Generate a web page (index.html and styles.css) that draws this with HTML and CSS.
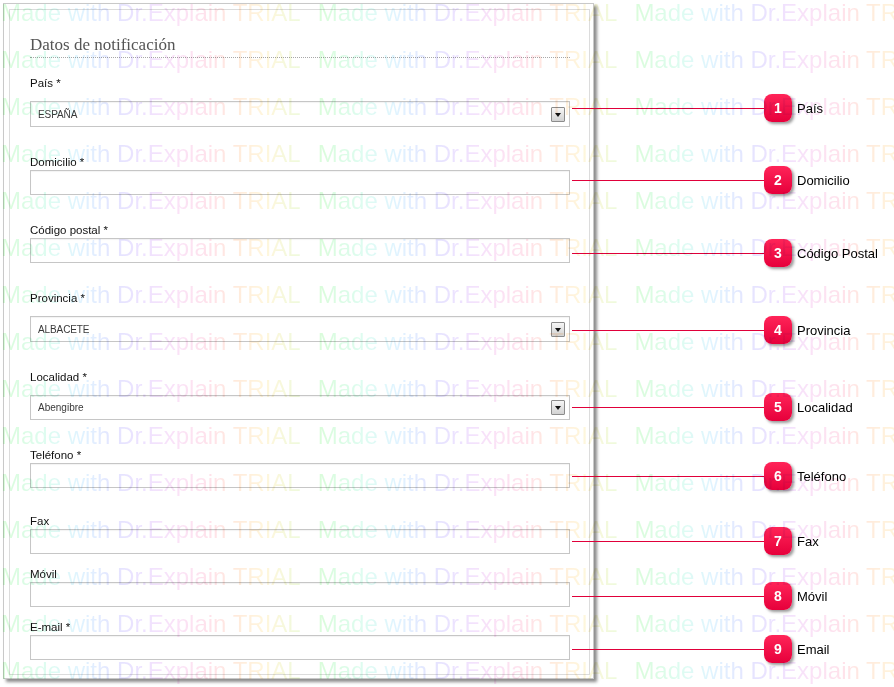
FILE: index.html
```html
<!DOCTYPE html>
<html lang="es">
<head>
<meta charset="utf-8">
<title>Datos de notificación</title>
<link rel="stylesheet" href="styles.css">
</head>
<body>
<div class="page">
  <div class="frame">
    <div class="panel">
      <h2 class="title">Datos de notificación</h2>

      <div class="field field--select">
        <div class="label">País *</div>
        <div class="box select"><span class="value">ESPAÑA</span><span class="arrow"></span></div>
      </div>
      <div class="field">
        <div class="label">Domicilio *</div>
        <div class="box"></div>
      </div>
      <div class="field">
        <div class="label">Código postal *</div>
        <div class="box"></div>
      </div>
      <div class="field field--select">
        <div class="label">Provincia *</div>
        <div class="box select"><span class="value">ALBACETE</span><span class="arrow"></span></div>
      </div>
      <div class="field field--select field--short">
        <div class="label">Localidad *</div>
        <div class="box select"><span class="value value--mixed">Abengibre</span><span class="arrow"></span></div>
      </div>
      <div class="field field--near">
        <div class="label">Teléfono *</div>
        <div class="box"></div>
      </div>
      <div class="field field--tight">
        <div class="label">Fax</div>
        <div class="box"></div>
      </div>
      <div class="field field--tight">
        <div class="label">Móvil</div>
        <div class="box"></div>
      </div>
      <div class="field">
        <div class="label">E-mail *</div>
        <div class="box"></div>
      </div>
    </div>
  </div>

  <div class="callouts">
    <div class="callout c1"><span class="line"></span><span class="badge">1</span><span class="ctext">País</span></div>
    <div class="callout c2"><span class="line"></span><span class="badge">2</span><span class="ctext">Domicilio</span></div>
    <div class="callout c3"><span class="line"></span><span class="badge">3</span><span class="ctext">Código Postal</span></div>
    <div class="callout c4"><span class="line"></span><span class="badge">4</span><span class="ctext">Provincia</span></div>
    <div class="callout c5"><span class="line"></span><span class="badge">5</span><span class="ctext">Localidad</span></div>
    <div class="callout c6"><span class="line"></span><span class="badge">6</span><span class="ctext">Teléfono</span></div>
    <div class="callout c7"><span class="line"></span><span class="badge">7</span><span class="ctext">Fax</span></div>
    <div class="callout c8"><span class="line"></span><span class="badge">8</span><span class="ctext">Móvil</span></div>
    <div class="callout c9"><span class="line"></span><span class="badge">9</span><span class="ctext">Email</span></div>
  </div>

  <div class="watermark" aria-hidden="true">
    <div class="wm-row"><span class="wm">Made with Dr.Explain TRIAL</span><span class="wm">Made with Dr.Explain TRIAL</span><span class="wm">Made with Dr.Explain TRIAL</span></div>
    <div class="wm-row"><span class="wm">Made with Dr.Explain TRIAL</span><span class="wm">Made with Dr.Explain TRIAL</span><span class="wm">Made with Dr.Explain TRIAL</span></div>
    <div class="wm-row"><span class="wm">Made with Dr.Explain TRIAL</span><span class="wm">Made with Dr.Explain TRIAL</span><span class="wm">Made with Dr.Explain TRIAL</span></div>
    <div class="wm-row"><span class="wm">Made with Dr.Explain TRIAL</span><span class="wm">Made with Dr.Explain TRIAL</span><span class="wm">Made with Dr.Explain TRIAL</span></div>
    <div class="wm-row"><span class="wm">Made with Dr.Explain TRIAL</span><span class="wm">Made with Dr.Explain TRIAL</span><span class="wm">Made with Dr.Explain TRIAL</span></div>
    <div class="wm-row"><span class="wm">Made with Dr.Explain TRIAL</span><span class="wm">Made with Dr.Explain TRIAL</span><span class="wm">Made with Dr.Explain TRIAL</span></div>
    <div class="wm-row"><span class="wm">Made with Dr.Explain TRIAL</span><span class="wm">Made with Dr.Explain TRIAL</span><span class="wm">Made with Dr.Explain TRIAL</span></div>
    <div class="wm-row"><span class="wm">Made with Dr.Explain TRIAL</span><span class="wm">Made with Dr.Explain TRIAL</span><span class="wm">Made with Dr.Explain TRIAL</span></div>
    <div class="wm-row"><span class="wm">Made with Dr.Explain TRIAL</span><span class="wm">Made with Dr.Explain TRIAL</span><span class="wm">Made with Dr.Explain TRIAL</span></div>
    <div class="wm-row"><span class="wm">Made with Dr.Explain TRIAL</span><span class="wm">Made with Dr.Explain TRIAL</span><span class="wm">Made with Dr.Explain TRIAL</span></div>
    <div class="wm-row"><span class="wm">Made with Dr.Explain TRIAL</span><span class="wm">Made with Dr.Explain TRIAL</span><span class="wm">Made with Dr.Explain TRIAL</span></div>
    <div class="wm-row"><span class="wm">Made with Dr.Explain TRIAL</span><span class="wm">Made with Dr.Explain TRIAL</span><span class="wm">Made with Dr.Explain TRIAL</span></div>
    <div class="wm-row"><span class="wm">Made with Dr.Explain TRIAL</span><span class="wm">Made with Dr.Explain TRIAL</span><span class="wm">Made with Dr.Explain TRIAL</span></div>
    <div class="wm-row"><span class="wm">Made with Dr.Explain TRIAL</span><span class="wm">Made with Dr.Explain TRIAL</span><span class="wm">Made with Dr.Explain TRIAL</span></div>
    <div class="wm-row"><span class="wm">Made with Dr.Explain TRIAL</span><span class="wm">Made with Dr.Explain TRIAL</span><span class="wm">Made with Dr.Explain TRIAL</span></div>
  </div>
</div>
</body>
</html>
```

FILE: styles.css
```css
html, body {
  margin: 0;
  padding: 0;
  background: #ffffff;
}

body {
  font-family: "Liberation Sans", Arial, sans-serif;
  color: #222;
}

.page {
  position: relative;
  width: 894px;
  height: 687px;
  overflow: hidden;
}

.frame {
  box-sizing: border-box;
  width: 591px;
  height: 676px;
  margin: 3px 0 0 3px;
  padding: 5px 3px 3px 5px;
  border: 1px solid #c9c9c9;
  background: #fff;
  box-shadow: 3px 3px 3px rgba(0, 0, 0, 0.45);
}

.panel {
  box-sizing: border-box;
  height: 100%;
  border: 1px solid #dcdcdc;
  padding: 25px 19px 0 20px;
}

.title {
  margin: 0 0 18px 0;
  padding-bottom: 2px;
  font-family: "Liberation Serif", "Times New Roman", serif;
  font-weight: normal;
  font-size: 17px;
  line-height: 20px;
  color: #555;
  border-bottom: 1px dotted #a8a8a8;
}

.field {
  margin-bottom: 28px;
}

.field--near {
  margin-bottom: 26px;
}

.field--tight {
  margin-bottom: 13px;
}

.label {
  font-size: 11.5px;
  line-height: 14px;
  color: #111;
  margin-bottom: 1px;
}

.field--select .label {
  margin-bottom: 11px;
}

.box {
  box-sizing: border-box;
  width: 540px;
  height: 25px;
  border: 1px solid #c6c6c6;
  background: #fff;
  box-shadow: inset 0 1px 1px rgba(0, 0, 0, 0.05);
}

.select {
  height: 26px;
  display: flex;
  align-items: center;
  justify-content: space-between;
  padding: 0 4px 0 7px;
}

.field--short .select {
  height: 25px;
}

.value {
  font-size: 10px;
  color: #3a3a3a;
  letter-spacing: -0.1px;
}

.value--mixed {
  letter-spacing: 0;
}

.arrow {
  box-sizing: border-box;
  width: 14px;
  height: 15px;
  border: 1px solid #8c8c8c;
  border-radius: 1px;
  background: linear-gradient(#f6f6f6, #d2d2d2);
  display: flex;
  align-items: center;
  justify-content: center;
}

.arrow::after {
  content: "";
  width: 0;
  height: 0;
  border-left: 3px solid transparent;
  border-right: 3px solid transparent;
  border-top: 4px solid #111;
  margin-top: 1px;
}

/* annotation overlay */
.callouts {
  position: absolute;
  left: 0;
  top: 0;
  width: 894px;
  height: 687px;
}

.callout {
  position: absolute;
  left: 572px;
  height: 28px;
  display: flex;
  align-items: center;
}

.c1 { top: 94px; }
.c2 { top: 166px; }
.c3 { top: 239px; }
.c4 { top: 316px; }
.c5 { top: 393px; }
.c6 { top: 462px; }
.c7 { top: 527px; }
.c8 { top: 582px; }
.c9 { top: 635px; }

.line {
  width: 192px;
  height: 1px;
  background: #e0003a;
}

.badge {
  width: 28px;
  height: 28px;
  border-radius: 8px;
  background: linear-gradient(#ff2458, #e6003b);
  box-shadow: 2px 2px 3px rgba(0, 0, 0, 0.4);
  color: #fff;
  font-weight: bold;
  font-size: 14px;
  line-height: 28px;
  text-align: center;
}

.ctext {
  margin-left: 5px;
  font-size: 13px;
  color: #000;
}

/* trial watermark overlay */
.watermark {
  position: absolute;
  left: 0;
  top: 0;
  width: 894px;
  height: 687px;
  overflow: hidden;
  pointer-events: none;
  mix-blend-mode: multiply;
}

.wm-row {
  display: flex;
  gap: 17px;
  height: 47px;
  line-height: 47px;
  white-space: nowrap;
  margin-left: 1px;
}

.wm-row:first-child {
  margin-top: -11px;
}

.wm {
  flex: none;
  font-family: "Liberation Sans", Arial, sans-serif;
  font-size: 24px;
  background: linear-gradient(90deg,
    #dafcda 0%,
    #defcf2 16%,
    #e0f4ff 26%,
    #e4e4ff 38%,
    #eee2ff 48%,
    #fae2f8 58%,
    #ffe2ea 70%,
    #ffeadc 78%,
    #fff6dc 88%,
    #eefadc 100%);
  -webkit-background-clip: text;
  background-clip: text;
  color: transparent;
}
```
